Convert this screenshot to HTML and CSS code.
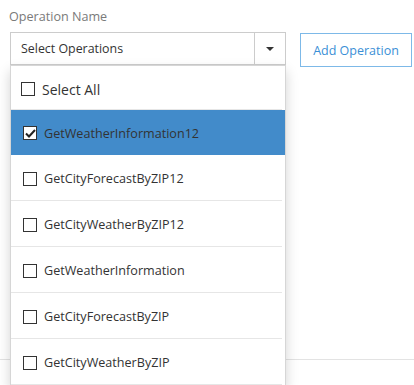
FILE: index.html
```html
<!DOCTYPE html>
<html>
<head>
<meta charset="utf-8">
<link rel="stylesheet" href="styles.css">
</head>
<body>
<div class="page">
  <div class="field">
    <div class="label">Operation Name</div>
    <div class="row">
      <div class="picker">
        <div class="select">
          <span class="select-text">Select Operations</span>
          <span class="select-btn"><span class="caret"></span></span>
        </div>
        <ul class="menu">
          <li class="item all"><span class="box"></span><span>Select All</span></li>
          <li class="item active"><span class="box checked"><svg width="11" height="9" viewBox="0 0 11 9"><path d="M1 4.5 L4 7.5 L10 1" fill="none" stroke="#222" stroke-width="2"/></svg></span><span>GetWeatherInformation12</span></li>
          <li class="item"><span class="box"></span><span>GetCityForecastByZIP12</span></li>
          <li class="item"><span class="box"></span><span>GetCityWeatherByZIP12</span></li>
          <li class="item"><span class="box"></span><span>GetWeatherInformation</span></li>
          <li class="item"><span class="box"></span><span>GetCityForecastByZIP</span></li>
          <li class="item"><span class="box"></span><span>GetCityWeatherByZIP</span></li>
        </ul>
      </div>
      <button class="add">Add Operation</button>
    </div>
  </div>
  <div class="under"></div>
</div>
</body>
</html>
```
FILE: styles.css
```css
* { box-sizing: border-box; }
html, body { margin: 0; padding: 0; background: #fff; }
body {
  font-family: "Open Sans", "Noto Sans", sans-serif;
  font-size: 12.4px;
  color: #333;
  overflow: hidden;
  height: 385px;
}
.page { position: relative; height: 385px; }
.field { padding: 7px 0 0 10px; }
.label {
  color: #7a7a7a;
  font-size: 12.6px;
  line-height: 19px;
  margin: 0 0 6px -1px;
}
.row { display: flex; align-items: flex-start; gap: 14px; }
.picker { position: relative; width: 276px; }
.select {
  display: flex;
  height: 33px;
  border: 1px solid #ccc;
  background: #fff;
}
.select-text {
  flex: 1;
  padding-left: 10px;
  line-height: 31px;
  color: #333;
}
.select-btn {
  width: 31px;
  border-left: 1px solid #ccc;
  display: flex;
  align-items: center;
  justify-content: center;
}
.caret {
  width: 0; height: 0;
  border-left: 4px solid transparent;
  border-right: 4px solid transparent;
  border-top: 4px solid #333;
}
.add {
  margin-top: 1px;
  width: 112px;
  height: 34px;
  border: 1px solid #7db9e8;
  background: #fff;
  color: #3a8fd6;
  font-family: inherit;
  font-size: 12.5px;
  padding: 0;
}
.menu {
  position: absolute;
  top: 33px;
  left: 0;
  width: 276px;
  margin: 0;
  padding: 0;
  list-style: none;
  background: #fff;
  border: 1px solid #d6d6d6;
  box-shadow: 0 6px 12px rgba(0,0,0,.175);
  z-index: 2;
}
.item {
  display: flex;
  align-items: center;
  height: 46px;
  padding: 2px 0 0 12px;
  border-bottom: 1px solid #e6e6e6;
  margin-right: 3px;
  gap: 7px;
  font-size: 12.6px;
}
.item.all { height: 44px; padding: 3px 0 0 10px; font-size: 14px; gap: 7px; }
.item.active {
  background: #428bca;
  margin-right: 0;
  border-bottom-color: #428bca;
  height: 45px;
}
.box {
  width: 14px; height: 14px;
  border: 1px solid #333;
  background: #fff;
  flex: none;
  display: flex;
  align-items: center;
  justify-content: center;
}
.under {
  position: absolute;
  left: 0; right: 0;
  top: 359px;
  border-top: 1px solid #e3e3e3;
}
```
